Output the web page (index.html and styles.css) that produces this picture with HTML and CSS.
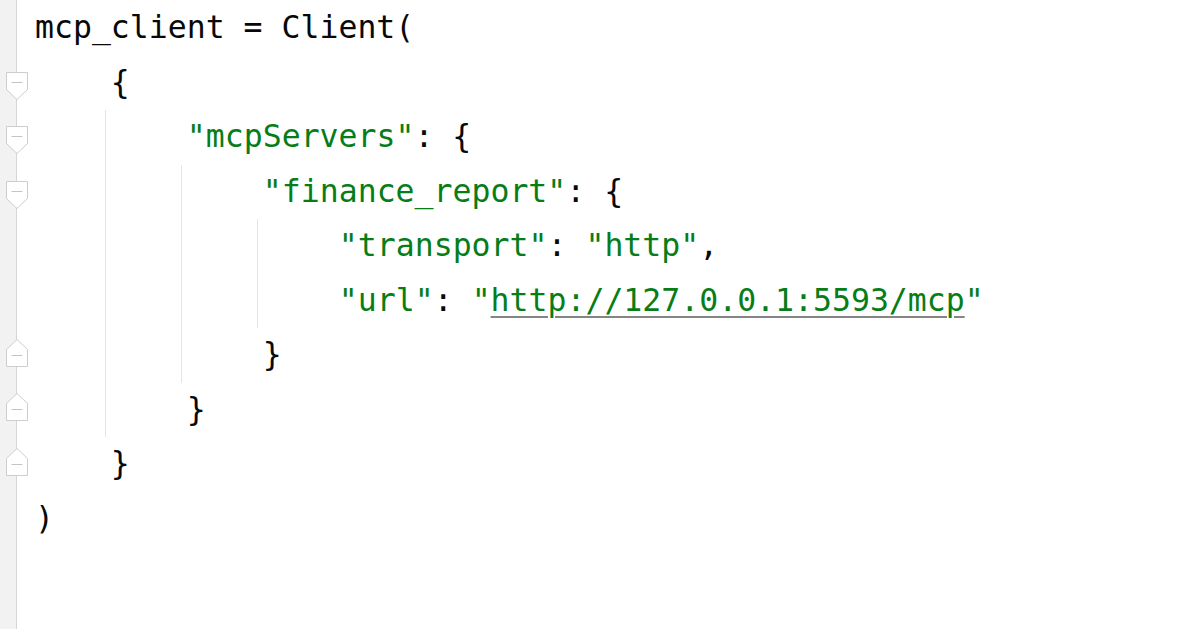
FILE: index.html
```html
<!DOCTYPE html>
<html>
<head>
<meta charset="utf-8">
<link rel="stylesheet" href="styles.css">
</head>
<body>
<div class="editor">
  <div class="gutter">
    <div class="grow"></div>
    <div class="grow"><svg class="fold fold-open" width="22" height="29" viewBox="0 0 22 29"><path d="M0.5 0.5 H21.5 V17.5 L11 27.5 L0.5 17.5 Z" fill="#fff" stroke="#cdcdcd"/><path d="M5.5 10.5 H16.5" stroke="#c4c4c4" stroke-width="1"/></svg></div>
    <div class="grow"><svg class="fold fold-open" width="22" height="29" viewBox="0 0 22 29"><path d="M0.5 0.5 H21.5 V17.5 L11 27.5 L0.5 17.5 Z" fill="#fff" stroke="#cdcdcd"/><path d="M5.5 10.5 H16.5" stroke="#c4c4c4" stroke-width="1"/></svg></div>
    <div class="grow"><svg class="fold fold-open" width="22" height="29" viewBox="0 0 22 29"><path d="M0.5 0.5 H21.5 V17.5 L11 27.5 L0.5 17.5 Z" fill="#fff" stroke="#cdcdcd"/><path d="M5.5 10.5 H16.5" stroke="#c4c4c4" stroke-width="1"/></svg></div>
    <div class="grow"></div>
    <div class="grow"></div>
    <div class="grow"><svg class="fold fold-close" width="22" height="29" viewBox="0 0 22 29"><path d="M11 0.5 L21.5 10.5 V27.5 H0.5 V10.5 Z" fill="#fff" stroke="#cdcdcd"/><path d="M5.5 16.5 H16.5" stroke="#c4c4c4" stroke-width="1"/></svg></div>
    <div class="grow"><svg class="fold fold-close" width="22" height="29" viewBox="0 0 22 29"><path d="M11 0.5 L21.5 10.5 V27.5 H0.5 V10.5 Z" fill="#fff" stroke="#cdcdcd"/><path d="M5.5 16.5 H16.5" stroke="#c4c4c4" stroke-width="1"/></svg></div>
    <div class="grow"><svg class="fold fold-close" width="22" height="29" viewBox="0 0 22 29"><path d="M11 0.5 L21.5 10.5 V27.5 H0.5 V10.5 Z" fill="#fff" stroke="#cdcdcd"/><path d="M5.5 16.5 H16.5" stroke="#c4c4c4" stroke-width="1"/></svg></div>
    <div class="grow"></div>
  </div>
  <div class="code">
    <div class="line">mcp_client = Client(</div>
    <div class="line">    {</div>
    <div class="block">
      <div class="line">    <span class="str">"mcpServers"</span>: {</div>
      <div class="block">
        <div class="line">    <span class="str">"finance_report"</span>: {</div>
        <div class="block">
          <div class="line">    <span class="str">"transport"</span>: <span class="str">"http"</span>,</div>
          <div class="line">    <span class="str">"url"</span>: <span class="str">"<span class="link">http://127.0.0.1:5593/mcp</span>"</span></div>
        </div>
        <div class="line">    }</div>
      </div>
      <div class="line">    }</div>
    </div>
    <div class="line">    }</div>
    <div class="line">)</div>
  </div>
</div>
</body>
</html>
```

FILE: styles.css
```css
html, body {
  margin: 0;
  padding: 0;
  background: #ffffff;
}

.editor {
  display: flex;
  width: 1200px;
  height: 629px;
  overflow: hidden;
  padding-top: 1px;
  box-sizing: border-box;
  background: linear-gradient(to right, #f2f2f2 0, #f2f2f2 16px, #d6d6d6 16px, #d6d6d6 17px, #ffffff 17px);
}

.gutter {
  width: 35px;
  flex: none;
  display: flex;
  flex-direction: column;
}

.grow {
  height: 54.5px;
  position: relative;
  flex: none;
}

.fold {
  position: absolute;
  left: 6px;
}

.fold-open {
  top: 16px;
}

.fold-close {
  top: 10.5px;
}

.code {
  flex: 1;
  font-family: "DejaVu Sans Mono", "Liberation Mono", monospace;
  font-size: 31.5px;
  color: #080808;
}

.line {
  height: 54.5px;
  line-height: 52px;
  white-space: pre;
}

.block {
  margin-left: 70px;
  border-left: 1px solid #e4e4e4;
  padding-left: 5px;
}

.str {
  color: #067d17;
}

.link {
  text-decoration: underline;
  text-decoration-color: #858585;
  text-decoration-thickness: 2px;
  text-underline-offset: 5px;
}
```
